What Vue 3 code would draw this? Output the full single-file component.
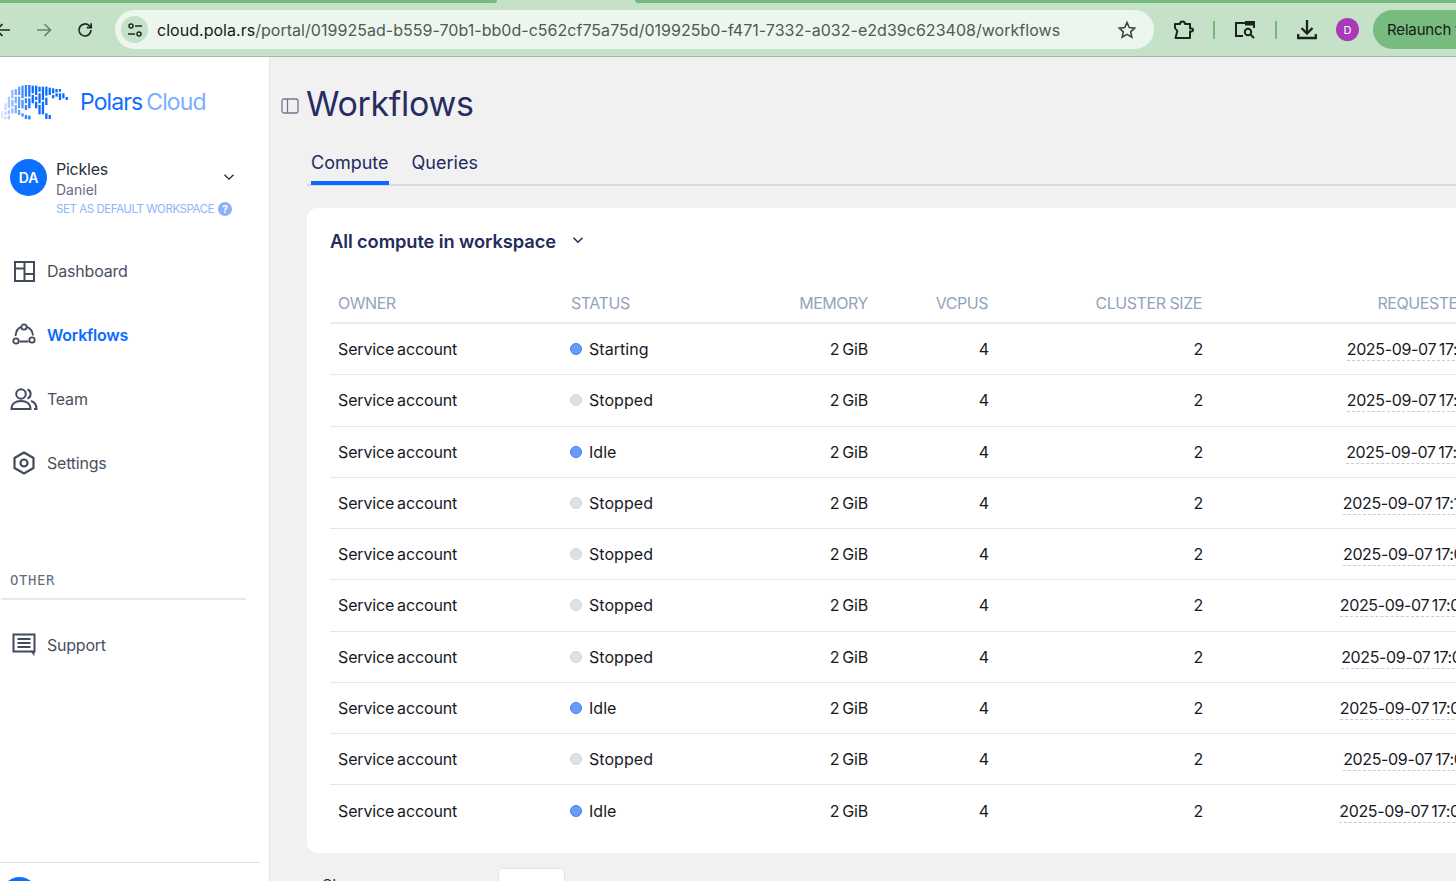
<script setup>
const logoCols = [
  [[108,130]],
  [[85,105],[110,120],[125,133]],
  [[65,100],[105,118],[122,133]],
  [[45,70],[75,95],[100,115]],
  [[42,60],[65,85],[90,115]],
  [[35,60],[65,100],[105,120]],
  [[32,70],[75,100],[115,125]],
  [[30,65],[70,85],[90,105],[120,132]],
  [[30,65],[70,100],[122,133]],
  [[32,55],[60,85]],
  [[32,60],[65,75],[80,100]],
  [[35,50],[55,85],[90,118]],
  [[35,75],[80,118]],
  [[35,62],[68,90],[115,132]],
  [[38,60],[120,132]],
  [[40,55],[60,70]],
  [[42,52],[55,65]],
  [[42,50],[55,75]],
  [[55,70]],
  [[66,75]]
]
const logoBars = logoCols.flatMap((segs, i) =>
  segs.map(([a, b]) => ({
    x: 1 + i * 3.4,
    y: a / 3 - 10,
    h: (b - a) / 3,
    o: Math.min(1, 0.15 + i * 0.1)
  }))
)
const rows = [
  { status: 'Starting', on: true, time: '17:11:21' },
  { status: 'Stopped', on: false, time: '17:11:21' },
  { status: 'Idle', on: true, time: '17:11:14' },
  { status: 'Stopped', on: false, time: '17:10:41' },
  { status: 'Stopped', on: false, time: '17:09:11' },
  { status: 'Stopped', on: false, time: '17:08:12' },
  { status: 'Stopped', on: false, time: '17:07:41' },
  { status: 'Idle', on: true, time: '17:06:12' },
  { status: 'Stopped', on: false, time: '17:05:11' },
  { status: 'Idle', on: true, time: '17:04:12' }
]
</script>

<template>
  <div class="page">
    <header class="chrome">
      <div class="tabstrip"><span class="tab-a"></span><span class="tab-b"></span></div>
      <div class="toolbar">
        <button class="nav-btn">
          <svg width="18" height="18" viewBox="0 0 18 18" fill="none" stroke="#1f2a20" stroke-width="1.7"><path d="M16 9H2.5M8.5 3 2.5 9l6 6"/></svg>
        </button>
        <button class="nav-btn">
          <svg width="18" height="18" viewBox="0 0 18 18" fill="none" stroke="#6d8370" stroke-width="1.7"><path d="M2 9h13.5M9.5 3l6 6-6 6"/></svg>
        </button>
        <button class="nav-btn">
          <svg width="18" height="18" viewBox="0 0 18 18" fill="none" stroke="#1f2a20" stroke-width="1.7"><path d="M15 9a6 6 0 1 1-1.8-4.3L15 6.4"/><path d="M15.2 2.2v4.4h-4.4" /></svg>
        </button>
        <div class="omnibox">
          <span class="site-chip">
            <svg width="18" height="18" viewBox="0 0 18 18" fill="none" stroke="#1f2a20" stroke-width="1.5"><circle cx="5" cy="5" r="2"/><path d="M9 5h7M2 13h7"/><circle cx="13" cy="13" r="2"/></svg>
          </span>
          <span class="url"><b>cloud.pola.rs</b>/portal/019925ad-b559-70b1-bb0d-c562cf75a75d/019925b0-f471-7332-a032-e2d39c623408/workflows</span>
          <svg class="star" width="20" height="20" viewBox="0 0 20 20" fill="none" stroke="#3a453b" stroke-width="1.6"><path d="M10 2.5l2.3 5 5.4.6-4 3.7 1.1 5.4-4.8-2.8-4.8 2.8 1.1-5.4-4-3.7 5.4-.6z"/></svg>
        </div>
        <div class="tb-right">
          <svg class="puzzle" width="22" height="22" viewBox="0 0 22 22" fill="none" stroke="#1c241d" stroke-width="2"><path d="M2 5h5a2.5 2.5 0 0 1 5 0h5v4.500h1.500a1.500 1.500 0 0 1 0 3H17V19H2.500l1.800-7L2 9z" stroke-linejoin="round"/></svg>
          <i class="sep sep-1"></i>
          <svg class="lens" width="22" height="20" viewBox="0 0 22 20" fill="none" stroke="#1c241d" stroke-width="2"><path d="M9 16H2V3h18v5"/><rect x="11" y="1" width="10" height="4.500" fill="#1c241d" stroke="none"/><circle cx="14" cy="12" r="3.200"/><path d="M16.500 14.500 20 18"/></svg>
          <i class="sep sep-2"></i>
          <svg class="dl" width="20" height="20" viewBox="0 0 20 20" fill="none" stroke="#1c241d" stroke-width="2.300"><path d="M10 0v13M4.500 8l5.500 5.500L15.500 8M1.200 14v4h17.600v-4"/></svg>
          <span class="profile">D</span>
          <span class="relaunch">Relaunch to update</span>
        </div>
      </div>
    </header>

    <div class="shell">
      <aside class="sidebar">
        <div class="brand">
          <svg class="logo" width="70" height="36" viewBox="0 0 70 36">
            <rect v-for="(b, i) in logoBars" :key="i" :x="b.x" :y="b.y" width="2.300" :height="b.h" fill="#0b6bff" :opacity="b.o"/>
          </svg>
          <span class="brand-text">Polars<em>Cloud</em></span>
        </div>

        <div class="workspace">
          <span class="avatar">DA</span>
          <div class="ws-text">
            <div class="ws-top">
              <div>
                <div class="ws-name">Pickles</div>
                <div class="ws-user">Daniel</div>
              </div>
              <svg class="ws-chev" width="12" height="12" viewBox="0 0 12 12" fill="none" stroke="#1f2430" stroke-width="1.200"><path d="M1.500 3.800 6 8.200l4.500-4.400"/></svg>
            </div>
            <div class="ws-default">SET AS DEFAULT WORKSPACE <span class="help">?</span></div>
          </div>
        </div>

        <nav class="nav">
          <a class="nav-item">
            <svg width="22" height="22" viewBox="0 0 22 22" fill="none" stroke="#434a5e" stroke-width="2"><path d="M2 2h19v19H2zM11.500 2v19M11.500 14h9.500M2 8.500h9.500"/></svg>
            Dashboard
          </a>
          <a class="nav-item active">
            <svg width="24" height="24" viewBox="0 0 24 24" fill="none" stroke="#434a5e" stroke-width="1.800"><circle cx="12" cy="4" r="2.700"/><circle cx="4" cy="18" r="2.700"/><circle cx="20" cy="17" r="2.700"/><path d="M9 3.800C6 5 4 8 3.500 13M15 3.800C18 5 20.500 8 21 12.500M7.500 18.500h9"/></svg>
            Workflows
          </a>
          <a class="nav-item">
            <svg width="28" height="24" viewBox="0 0 28 24" fill="none" stroke="#434a5e" stroke-width="2"><circle cx="11" cy="7" r="4.800"/><path d="M1.500 22c0-5 4-8 9.500-8s9.500 3 9.500 8zM17.500 2.500a4.800 4.800 0 0 1 0 9M21 14c3.500 1 5.500 4 5.500 8H24"/></svg>
            Team
          </a>
          <a class="nav-item">
            <svg width="22" height="24" viewBox="0 0 22 24" fill="none" stroke="#434a5e" stroke-width="2.200"><path d="M11 1.500 20.500 7v10L11 22.500 1.500 17V7z" stroke-linejoin="round"/><circle cx="11" cy="12" r="3.500"/></svg>
            Settings
          </a>
        </nav>

        <div class="other">OTHER</div>
        <a class="nav-item support">
          <svg width="24" height="24" viewBox="0 0 24 24" fill="none" stroke="#434a5e" stroke-width="2"><path d="M1.500 1.500h21v17H1.500zM5.500 6h13M5.500 10h13M5.500 14h13"/><path d="M19 19h3.500v4z" fill="#434a5e" stroke="none"/></svg>
          Support
        </a>

        <div class="side-foot"><span class="foot-avatar"></span></div>
      </aside>

      <main class="main">
        <div class="title-row">
          <svg class="panel-ico" width="18" height="18" viewBox="0 0 18 18" fill="none" stroke="#6f7792" stroke-width="1.300"><rect x="1" y="2" width="16" height="14" rx="2"/><path d="M6.500 2v14"/></svg>
          <h1>Workflows</h1>
        </div>
        <div class="tabs">
          <span class="tabitem current">Compute</span>
          <span class="tabitem">Queries</span>
        </div>

        <section class="card">
          <div class="card-head">
            <h2>All compute in workspace</h2>
            <svg class="card-chev" width="12" height="12" viewBox="0 0 12 12" fill="none" stroke="#252b5e" stroke-width="1.600"><path d="M1.500 3.800 6 8.200l4.500-4.400"/></svg>
          </div>
          <div class="grid head">
            <span>OWNER</span><span class="status-h">STATUS</span><span class="r">MEMORY</span><span class="r">VCPUS</span><span class="r">CLUSTER SIZE</span><span class="r req">REQUESTED AT</span>
          </div>
          <div v-for="(row, i) in rows" :key="i" class="grid row">
            <span>Service account</span>
            <span class="status"><i class="dot" :class="{ on: row.on }"></i>{{ row.status }}</span>
            <span class="r">2 GiB</span>
            <span class="r num">4</span>
            <span class="r num">2</span>
            <span class="r"><span class="time">2025-09-07 {{ row.time }}</span></span>
          </div>
        </section>

        <div class="pager">
          <span class="pager-label">Show rows per page</span>
          <span class="pager-box"></span>
        </div>
      </main>
    </div>
  </div>
</template>

<style>
html, body { margin: 0; background: #fff; }
</style>

<style scoped>
.page {
  width: 1456px;
  height: 881px;
  overflow: hidden;
  font-family: Inter, "Liberation Sans", sans-serif;
  display: flex;
  flex-direction: column;
}
.chrome { flex: none; background: #c5e1c7; border-bottom: 1px solid #a3b8a5; height: 56px; }
.tabstrip { display: flex; height: 3px; }
.tab-a { width: 497px; background: #75ba7d; border-bottom-right-radius: 4px; }
.tab-b { flex: 1; margin-left: 138px; background: #75ba7d; border-bottom-left-radius: 4px; }
.toolbar { display: flex; align-items: center; height: 39px; margin: 7px 0 0 -18px; }
.nav-btn {
  width: 41px; height: 39px; padding: 0; border: 0; background: none; flex: none;
  display: flex; align-items: center; justify-content: center;
}
.omnibox {
  flex: none; width: 1039px; height: 39px; margin-left: 10px; border-radius: 20px; background: #edf6ee;
  display: flex; align-items: center; position: relative;
}
.site-chip {
  width: 27px; height: 27px; margin-left: 6px; border-radius: 50%; background: #c5e1c7;
  display: flex; align-items: center; justify-content: center; flex: none;
}
.url { margin-left: 9px; font-size: 16px; letter-spacing: 0.03px; color: #4f5a50; white-space: nowrap; }
.url b { font-weight: 400; color: #141a15; }
.star { margin-left: auto; margin-right: 17px; }
.tb-right { flex: none; display: flex; align-items: center; margin-left: 19px; white-space: nowrap; }
.sep { display: block; width: 2px; height: 18px; background: #73b97b; flex: none; }
.sep-1 { margin: 0 19px 0 18px; }
.sep-2 { margin: 0 20px 0 19px; }
.profile {
  width: 23px; height: 23px; border-radius: 50%; background: #a93bb8; color: #fff; font-size: 11px;
  display: flex; align-items: center; justify-content: center; margin: 0 14px 0 19px; flex: none;
}
.relaunch {
  display: block; padding: 0 14px; height: 39px; line-height: 39px; background: #78bb7f; border-radius: 20px;
  font-size: 15px; letter-spacing: -0.15px; color: #141a15; flex: none;
}

.shell { flex: 1; display: flex; min-height: 0; }
.sidebar {
  flex: none; width: 269px; box-sizing: content-box; border-right: 1px solid #e4e4e6; background: #fff;
  display: flex; flex-direction: column; position: relative;
}
.brand { height: 90px; display: flex; align-items: center; flex: none; padding-top: 0; }
.logo { flex: none; margin-top: 2px; }
.brand-text { margin-left: 10px; font-size: 23px; color: #0f6eff; letter-spacing: -0.9px; }
.brand-text em { font-style: normal; color: #7cafff; margin-left: 4px; }
.workspace { display: flex; padding: 12px 0 0 10px; height: 69px; flex: none; box-sizing: content-box; }
.avatar {
  width: 37px; height: 37px; border-radius: 50%; background: #0b6fff; color: #fff; font-weight: 600; font-size: 14px;
  display: flex; align-items: center; justify-content: center; flex: none;
}
.ws-text { margin-left: 9px; width: 180px; }
.ws-top { display: flex; justify-content: space-between; align-items: center; padding-right: 1px; }
.ws-chev { margin-top: -6px; }
.ws-name { font-size: 16px; line-height: 20px; color: #2a2f3c; letter-spacing: -0.25px; }
.ws-user { font-size: 14px; line-height: 21px; color: #666c7a; }
.ws-default { margin-top: 1px; font-size: 11.5px; line-height: 16px; color: #8db5fb; letter-spacing: -0.44px; white-space: nowrap; display: flex; align-items: center; }
.help {
  margin-left: 4px; width: 14px; height: 14px; border-radius: 50%; background: #8db1fb; color: #fff; font-size: 10px; font-weight: 700;
  display: inline-flex; align-items: center; justify-content: center; letter-spacing: 0;
}
.nav { display: flex; flex-direction: column; flex: none; padding-top: 11px; }
.nav-item {
  height: 64px; display: flex; align-items: center; font-size: 16px; letter-spacing: -0.22px; color: #4a5060; position: relative; padding-left: 47px; flex: none;
}
.nav-item svg { position: absolute; left: 24px; top: 50%; transform: translate(-50%, -50%); }
.nav-item.active { color: #0b6bff; font-weight: 600; }
.other {
  margin: 76px 0 0 1px; width: 245px; padding: 0 0 8px 9px; box-sizing: border-box; font-family: "DejaVu Sans Mono", monospace;
  font-size: 14px; letter-spacing: 0.6px; line-height: 19px; color: #666c7a; border-bottom: 2px solid #e8e8ea; flex: none;
}
.support { margin-top: 13px; }
.side-foot {
  position: absolute; left: 0; bottom: -33px; width: 260px; height: 37px; box-sizing: content-box;
  border-top: 1px solid #dfe0e6; padding-top: 14px;
}
.foot-avatar { display: block; width: 37px; height: 37px; margin-left: 1px; border-radius: 50%; background: #0b6fff; }

.main { flex: none; width: 1400px; background: #f1f1f1; padding-left: 37px; box-sizing: border-box; overflow: hidden; }
.title-row { height: 93px; display: flex; align-items: center; margin-left: -26px; }
.panel-ico { margin-right: 7px; flex: none; margin-top: 4px; }
h1 { margin: 0; font-size: 34px; font-weight: 400; color: #272d63; letter-spacing: -0.33px; line-height: 40px; padding-top: 1px; }
.tabs { display: flex; padding-left: 4px; border-bottom: 2px solid #d6d9e4; height: 36px; box-sizing: border-box; gap: 23px; }
.tabitem { font-size: 18px; line-height: 26px; color: #232a63; height: 34px; box-sizing: border-box; }
.tabitem.current { border-bottom: 4px solid #0b6bff; height: 35px; }
.card {
  margin-top: 22px; background: #fff; border-radius: 10px; padding: 0 0 16px 23px; height: 645px; box-sizing: border-box;
}
.card-head { display: flex; align-items: center; height: 66px; }
h2 { margin: 0 16px 0 0; font-size: 18.3px; font-weight: 600; color: #252b5e; letter-spacing: -0.1px; }
.card-chev { margin-bottom: 2px; }
.grid {
  display: grid; grid-template-columns: 232px 168px 130px 120px 214px 287.5px; width: 1152px; padding-left: 8px; box-sizing: border-box;
  align-items: center; font-size: 16px; letter-spacing: -0.14px; word-spacing: -1.5px; white-space: nowrap;
}
.r { text-align: right; }
.num { margin-right: -1px; }
.req { margin-right: -2.5px; }
.head { height: 50px; padding-top: 10px; color: #94a3bd; border-bottom: 2px solid #ececf0; letter-spacing: -0.45px; word-spacing: 0; }
.status-h { margin-left: 1px; }
.row { height: 51.25px; color: #17191f; border-bottom: 1px solid #e4e6ee; width: 1156px; }
.head { width: 1156px; }
.row:nth-last-child(1) { border-bottom: 0; }
.status { display: flex; align-items: center; letter-spacing: 0.05px; }
.dot { width: 10px; height: 10px; border-radius: 50%; margin-right: 7px; background: #e0e1e5; border: 1px solid #d3d5da; flex: none; }
.dot.on { background: #6a9dfb; border-color: #3c7df0; }
.time { border-bottom: 1px dashed #c9ccd4; padding-bottom: 1px; letter-spacing: -0.35px; }
.pager { display: flex; margin-top: 15px; height: 40px; padding-left: 15px; font-size: 16px; color: #333; }
.pager-label { width: 176px; line-height: 20px; white-space: nowrap; padding-top: 7px; }
.pager-box { width: 67px; height: 40px; background: #fff; border: 1px solid #e4e4e8; border-radius: 4px; box-sizing: border-box; }
</style>
